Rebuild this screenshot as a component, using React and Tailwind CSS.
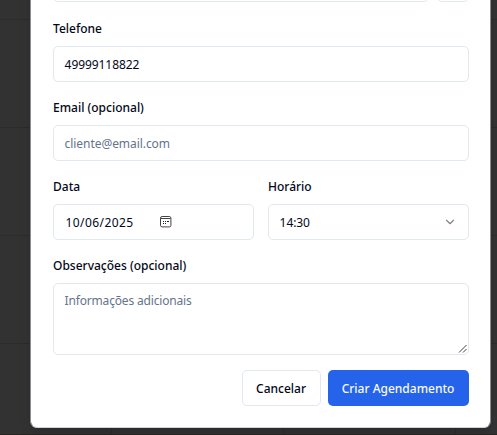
import React from "react";

const labelClass = "flex h-[14px] items-center pt-[2px] text-[12px] font-medium text-[#020817]";
const boxClass = "flex h-9 w-full items-center rounded-[5px] border border-[#e2e8f0] bg-white pl-[10.6px] pr-[11px] text-[12px]";

function Field({ label, children }) {
  return (
    <div className="flex flex-col gap-[11px]">
      <div className={labelClass}>
        <span>{label}</span>
      </div>
      {children}
    </div>
  );
}

function CalendarIcon() {
  return (
    <svg width="12" height="12" viewBox="0 0 12 12" fill="none" className="ml-[26.6px] shrink-0">
      <rect x="0.5" y="0.5" width="10.4" height="10.4" rx="1.6" stroke="#444" />
      <path d="M1 2.5H10.5" stroke="#444" strokeWidth="1" />
      <path d="M3 5.5H4M5 5.5H6M7 5.5H9M3 7.5H4M5 7.5H6" stroke="#222" strokeWidth="1" />
    </svg>
  );
}

function ChevronIcon() {
  return (
    <svg width="14" height="14" viewBox="0 0 24 24" fill="none" stroke="#818389" strokeWidth="2" strokeLinecap="round" strokeLinejoin="round">
      <path d="m6 9 6 6 6-6" />
    </svg>
  );
}

function Backdrop() {
  return (
    <div className="flex h-full flex-col bg-[#323232]">
      <div className="h-5 border-b border-[#2b2b2b]" />
      <div className="h-[108px] border-b border-[#2b2b2b]" />
      <div className="h-[108px] border-b border-[#2b2b2b]" />
      <div className="h-[108px] border-b border-[#2b2b2b]" />
      <div className="flex flex-1 border-b border-[#292525]">
        <div className="w-[112px] border-r border-[#2b2b2b]" />
        <div className="w-[172px] border-r border-[#2b2b2b]" />
        <div className="w-[172px] border-r border-[#2b2b2b]" />
      </div>
    </div>
  );
}

export default function App() {
  return (
    <div className="relative h-[435px] w-[497px] overflow-hidden font-['Noto_Sans','Open_Sans',sans-serif] text-[#020817]">
      <Backdrop />
      <div className="absolute left-[30px] top-[-40px] flex h-[468px] w-[461px] flex-col rounded-[7px] border border-x-[#8b8c92] border-b-[#cfd4dc] bg-white pl-[22px] pr-[21px] pt-[5px] shadow-lg">
        <div className="flex gap-[8px]">
          <div className="h-9 flex-1 rounded-[5px] border border-[#e2e8f0]" />
          <div className="h-9 w-8 rounded-[5px] border border-[#e2e8f0]" />
        </div>
        <div className="mt-[19px] flex flex-col gap-[18px]">
          <Field label="Telefone">
            <div className={boxClass}>
              <span className="pt-px tracking-[-0.07px]">49999118822</span>
            </div>
          </Field>
          <Field label="Email (opcional)">
            <div className={boxClass}>
              <span className="pt-px tracking-[-0.06px] text-[#64748b]">cliente@email.com</span>
            </div>
          </Field>
          <div className="grid grid-cols-2 gap-[14px]">
            <Field label="Data">
              <div className={boxClass}>
                <span className="ml-px pt-px tracking-[0.4px]">10/06/2025</span>
                <CalendarIcon />
              </div>
            </Field>
            <Field label="Horário">
              <div className={boxClass + " justify-between"}>
                <span className="pt-px tracking-[-0.07px]">14:30</span>
                <ChevronIcon />
              </div>
            </Field>
          </div>
          <Field label="Observações (opcional)">
            <div className="flex h-[72px] rounded-[5px] border border-[#e2e8f0] pl-[10.6px] pt-2 text-[12px] leading-[18px] tracking-[-0.17px] text-[#64748b]">
              <span className="flex-1">Informações adicionais</span>
              <svg width="10" height="10" viewBox="0 0 10 10" className="self-end" stroke="#444" fill="none">
                <path d="M1 8.5 8.5 1M5 8.5 8.5 5" />
              </svg>
            </div>
          </Field>
        </div>
        <div className="mt-[15px] flex justify-end gap-[7px] text-[12px] font-medium">
          <button className="h-9 w-[79px] rounded-[5px] border border-[#e2e8f0] bg-white pr-px pt-[2px]">Cancelar</button>
          <button className="h-9 w-[141px] whitespace-nowrap rounded-[5px] bg-[#2563eb] pr-px pt-[2px] text-[#f8fafc]">Criar Agendamento</button>
        </div>
      </div>
    </div>
  );
}
